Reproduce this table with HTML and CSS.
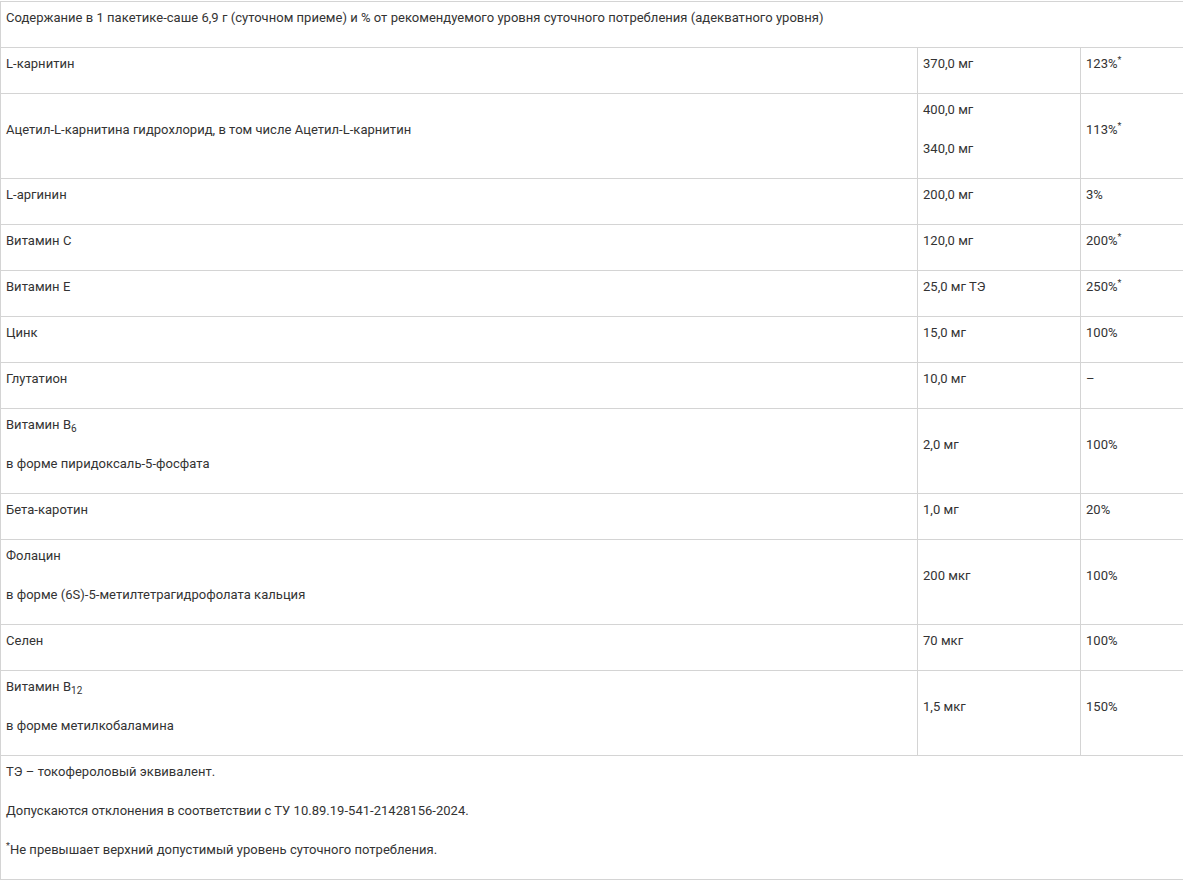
FILE: index.html
```html
<!DOCTYPE html>
<html lang="ru">
<head>
<meta charset="utf-8">
<link rel="stylesheet" href="styles.css">
</head>
<body>
<div class="wrap">
<table class="tbl">
<colgroup><col class="c1"><col class="c2"><col class="c3"></colgroup>
<tbody>
<tr><td colspan="3"><p>Содержание в 1 пакетике-саше 6,9 г (суточном приеме) и % от рекомендуемого уровня суточного потребления (адекватного уровня)</p></td></tr>
<tr><td><p>L-карнитин</p></td><td><p>370,0 мг</p></td><td><p>123%<sup>*</sup></p></td></tr>
<tr><td><p>Ацетил-L-карнитина гидрохлорид, в том числе Ацетил-L-карнитин</p></td><td><p>400,0 мг</p><p>340,0 мг</p></td><td><p>113%<sup>*</sup></p></td></tr>
<tr><td><p>L-аргинин</p></td><td><p>200,0 мг</p></td><td><p>3%</p></td></tr>
<tr><td><p>Витамин С</p></td><td><p>120,0 мг</p></td><td><p>200%<sup>*</sup></p></td></tr>
<tr><td><p>Витамин Е</p></td><td><p>25,0 мг ТЭ</p></td><td><p>250%<sup>*</sup></p></td></tr>
<tr><td><p>Цинк</p></td><td><p>15,0 мг</p></td><td><p>100%</p></td></tr>
<tr><td><p>Глутатион</p></td><td><p>10,0 мг</p></td><td><p>–</p></td></tr>
<tr><td><p>Витамин В<sub>6</sub></p><p>в форме пиридоксаль-5-фосфата</p></td><td><p>2,0 мг</p></td><td><p>100%</p></td></tr>
<tr><td><p>Бета-каротин</p></td><td><p>1,0 мг</p></td><td><p>20%</p></td></tr>
<tr><td><p>Фолацин</p><p>в форме (6S)-5-метилтетрагидрофолата кальция</p></td><td><p>200 мкг</p></td><td><p>100%</p></td></tr>
<tr><td><p>Селен</p></td><td><p>70 мкг</p></td><td><p>100%</p></td></tr>
<tr><td><p>Витамин В<sub>12</sub></p><p>в форме метилкобаламина</p></td><td><p>1,5 мкг</p></td><td><p>150%</p></td></tr>
<tr><td colspan="3"><p>ТЭ – токофероловый эквивалент.</p><p>Допускаются отклонения в соответствии с ТУ 10.89.19-541-21428156-2024.</p><p><sup>*</sup>Не превышает верхний допустимый уровень суточного потребления.</p></td></tr>
</tbody>
</table>
</div>
</body>
</html>
```
FILE: styles.css
```css
html, body {
  margin: 0;
  padding: 0;
  background: #fff;
}
.wrap {
  width: 100%;
  overflow: hidden;
  padding-top: 1px;
}
.tbl {
  border-collapse: collapse;
  table-layout: fixed;
  width: 1200px;
  font-family: Roboto, "Liberation Sans", sans-serif;
  font-size: 13px;
  letter-spacing: 0.025px;
  color: #333;
}
.c1 { width: 917px; }
.c2 { width: 163px; }
.c3 { width: 120px; }
.tbl td {
  border: 1px solid #d4d4d4;
  padding: 6px 5px 0 5px;
  vertical-align: middle;
  text-align: left;
}
.tbl p {
  margin: 0 0 19px 0;
  line-height: 20px;
}
.tbl sup {
  font-size: 9px;
  line-height: 0;
  vertical-align: 5px;
}
.tbl sub {
  font-size: 10px;
  line-height: 0;
  vertical-align: -3px;
}
```
